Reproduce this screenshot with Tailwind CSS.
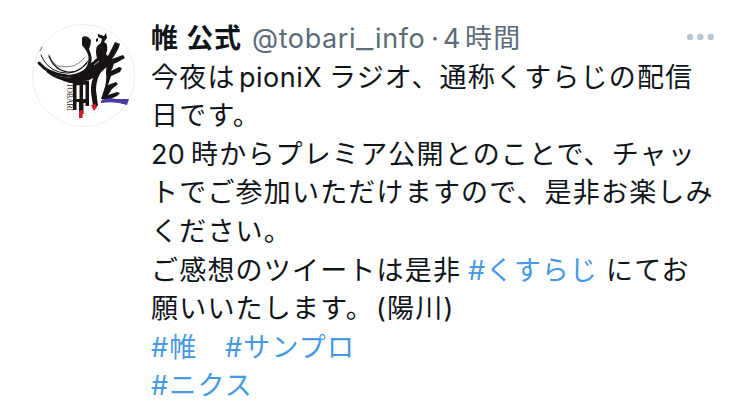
<!DOCTYPE html>
<html lang="ja">
<head>
<meta charset="utf-8">
<title>帷 公式</title>
<script src="https://cdn.jsdelivr.net/npm/@tailwindcss/browser@4"></script>
</head>
<body class="bg-white w-[750px] h-[403px] overflow-hidden">
<article class="flex h-[403px] pl-8 pt-5 text-[#0f1419] font-[Inter,'Noto_Sans_CJK_JP',sans-serif]">
  <svg class="w-[103px] h-[103px] mt-1 shrink-0" viewBox="0 0 103 103" role="img" aria-label="TOBARI">
    <circle cx="51.5" cy="51.5" r="51" fill="#fff" stroke="#e8eaec" stroke-width=".8"/>
    <g fill="none" stroke="#171213" stroke-linecap="round">
      <path d="M10 23L8 27M17 31Q20 40 28 43" stroke-width=".6"/>
      <path d="M28 42Q44 46 53 33" stroke-width=".5"/>
      <path d="M9 31Q14 44 27 48Q45 53 56 37" stroke-width="1"/>
      <path d="M17 32Q22 46 36 48Q47 49 55 39" stroke-width="1.2"/>
      <path d="M7 39Q16 50 35 52Q48 53 57 43" stroke-width="2.8"/>
      <path d="M11 43Q20 54 40 55" stroke-width="1.5"/>
      <path d="M16 48Q26 57 44 56" stroke-width="2"/>
    </g>
    <g fill="#171213">
      <path d="M50 14Q51 11 56 13L59 16Q59 21 57 25Q61 34 59 39L65 34Q63 28 65 22L69 19L75 21Q76 26 74 30L76 32L83 18L88 20Q86 27 80 35L91 31L93 34L84 39L77 41L69 48L66 52L57 56L46 59Q34 61 22 51Q35 57 48 50Q54 46 56 39Q58 31 53 25L50 21Z"/>
      <path d="M66 10L72 12L74 9L75 14L72 18L75 20L73 23L68 22L70 15L66 13ZM64 15L66 14L66 17L64 18Z"/>
      <path d="M75 36L81 36Q83 41 79 47L87 43L90 44L88 48L79 52L76 61L84 58L86 60L80 65L76 71L85 68L88 69L85 72L76 76L69 75L72 66Q75 58 74 48Z"/>
      <path d="M64 49L71 45Q64 54 64 66L66 82H61L59 68Q58 58 64 49Z"/>
      <path fill-rule="evenodd" d="M41 58.5L57 56.5V82H53.5V79H51.5V90H47V78H44.5V86H41ZM44.5 61.5V75H47.5V61ZM51 61V75H53.5V60.5Z"/>
    </g>
    <path stroke="#fff" stroke-width=".7" fill="none" d="M61 38L64 30M62 41L67 37"/>
    <path fill="#d31d2b" d="M47 87L51 86L50.5 94L47 94ZM59 81L64 80L65 83L62 87Z"/>
    <path fill="#4b3ca3" d="M69 77Q73 73 84 75L97 75L95 81Q83 77 69 79Z"/>
    <text transform="translate(35 59) rotate(90)" font-family="Liberation Serif,serif" font-size="8" textLength="28" lengthAdjust="spacingAndGlyphs" fill="#282324">TOBARI</text>
  </svg>
  <div class="ml-4 w-[580px] text-[27px] leading-[38.6px] whitespace-nowrap tracking-[1.19px]">
    <header class="flex h-[38.6px] justify-between">
      <div class="flex">
        <span class="font-bold w-[101px] tracking-[0.9px]">帷 公式</span>
        <span class="text-[#5b6b78] w-[179px] tracking-[0.6px]">@tobari<span class="inline-block origin-left scale-x-[1.4] mr-[6px]">_</span>info</span>
        <span class="text-[#5b6b78] w-[12px] tracking-normal">·</span>
        <span class="text-[#5b6b78] w-[22px]">4</span>
        <span class="text-[#5b6b78]">時間</span>
      </div>
      <svg class="w-7 h-2 mt-[13px] mr-[17px]" viewBox="0 0 28 8" fill="#b9c7d3"><circle cx="4" cy="4" r="3.2"/><circle cx="14.3" cy="4" r="3.2"/><circle cx="24.7" cy="4" r="3.2"/></svg>
    </header>
    <p class="flex h-[38.6px]"><span class="w-[88px]">今夜は</span><span class="w-[90px] tracking-[0.5px]">pioniX</span><span>ラジオ、通称くすらじの配信</span></p>
    <p class="h-[38.6px]">日です。</p>
    <p class="flex h-[38.6px]"><span class="w-[40px] tracking-[0.4px]">20</span><span>時からプレミア公開とのことで、チャッ</span></p>
    <p class="h-[38.6px]">トでご参加いただけますので、是非お楽しみ</p>
    <p class="h-[38.6px]">ください。</p>
    <p class="flex h-[38.6px]"><span class="w-[317px]">ご感想のツイートは是非</span><span class="w-[138px] tracking-[0.9px] text-[#4799e3]">#くすらじ</span><span>にてお</span></p>
    <p class="flex h-[38.6px]"><span class="w-[225px]">願いいたします。</span><span>(陽川)</span></p>
    <p class="flex h-[38.6px] text-[#4799e3]"><span class="w-[74px]">#帷</span><span>#サンプロ</span></p>
    <p class="h-[38.6px] text-[#4799e3]">#ニクス</p>
  </div>
</article>
</body>
</html>
